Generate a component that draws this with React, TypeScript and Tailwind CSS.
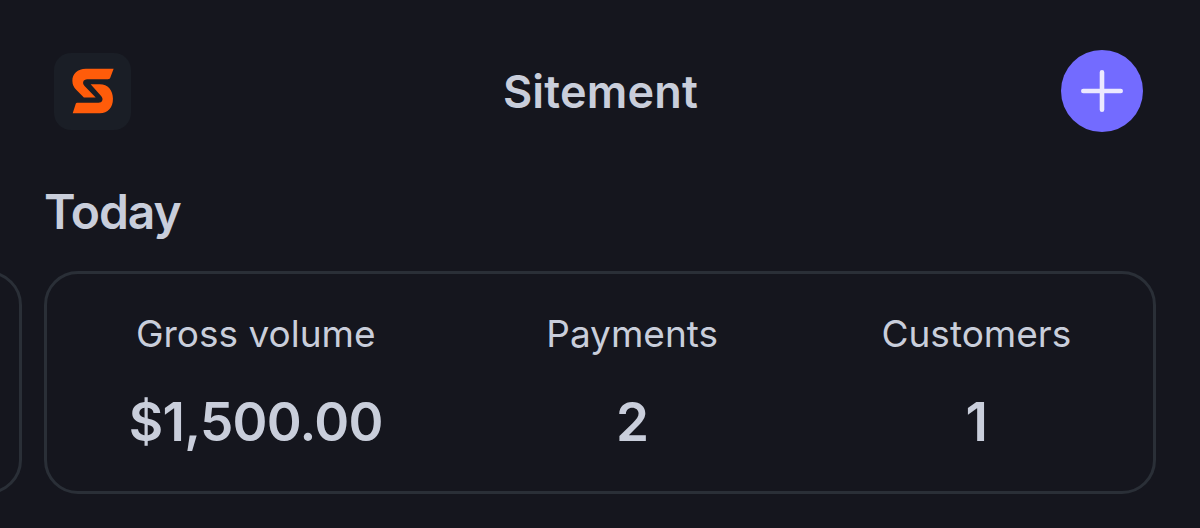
import React from 'react';

const stats = [
  { label: 'Gross volume', value: '$1,500.00' },
  { label: 'Payments', value: '2' },
  { label: 'Customers', value: '1' },
];

function Logo() {
  return <div className="w-[77px] h-[77px] rounded-[17px] bg-[#1a1e26] flex items-center justify-center">
      <svg width="42" height="46" viewBox="96 84 124 136" fill="#ff5c0a">
        <path d="M219 86 H137 C112 86 97 101 97 122 C97 133 101 142 109 149 L131 171 H166 L133 137 C125 128 129 117 141 117 H202 C206 117 208 116 209 113 Z" />
        <path d="M151 132 H178 C202 132 217 150 217 175 C217 201 202 218 178 218 H98 L107 190 C108 188 109 187 111 187 H174 C186 187 190 176 182 167 Z" />
      </svg>
    </div>;
}

export default function App() {
  return <div className="w-[1200px] h-[528px] overflow-hidden bg-[#15161e] text-[#c9cedb] font-['Inter',sans-serif]">
      <header className="grid grid-cols-[1fr_auto_1fr] items-center h-[82px] mt-[50px] pl-[58px] pr-[57px]">
        <div className="-ml-1">
          <Logo />
        </div>
        <h1 className="text-[45px] leading-none font-semibold tracking-[0.2px]">Sitement</h1>
        <button className="w-[82px] h-[82px] rounded-full bg-[#736bff] flex items-center justify-center justify-self-end">
          <svg width="42" height="42" viewBox="0 0 42 42" fill="none" stroke="#ece9ff" strokeWidth="4.6" strokeLinecap="round">
            <path d="M21 2.3v37.4M2.3 21h37.4" />
          </svg>
        </button>
      </header>
      <h2 className="mt-[56px] ml-[44px] text-[48px] leading-[48px] font-semibold tracking-[-1.1px]">Today</h2>
      <div className="flex gap-[22px] mt-[35px] -ml-[1090px] w-[2246px]">
        <div className="w-[1112px] h-[223px] shrink-0 rounded-[34px] border-[3px] border-[#2a2f37]" />
        <div className="w-[1112px] h-[223px] shrink-0 rounded-[34px] border-[3px] border-[#2a2f37] flex justify-around">
          {stats.map(stat => <div key={stat.label} className="flex flex-col items-center">
              <p className="mt-[40px] text-[37px] leading-[40px] whitespace-nowrap">{stat.label}</p>
              <p className="mt-[38px] text-[53px] leading-[60px] font-semibold tracking-[-0.7px] whitespace-nowrap">{stat.value}</p>
            </div>)}
        </div>
      </div>
    </div>;
}
